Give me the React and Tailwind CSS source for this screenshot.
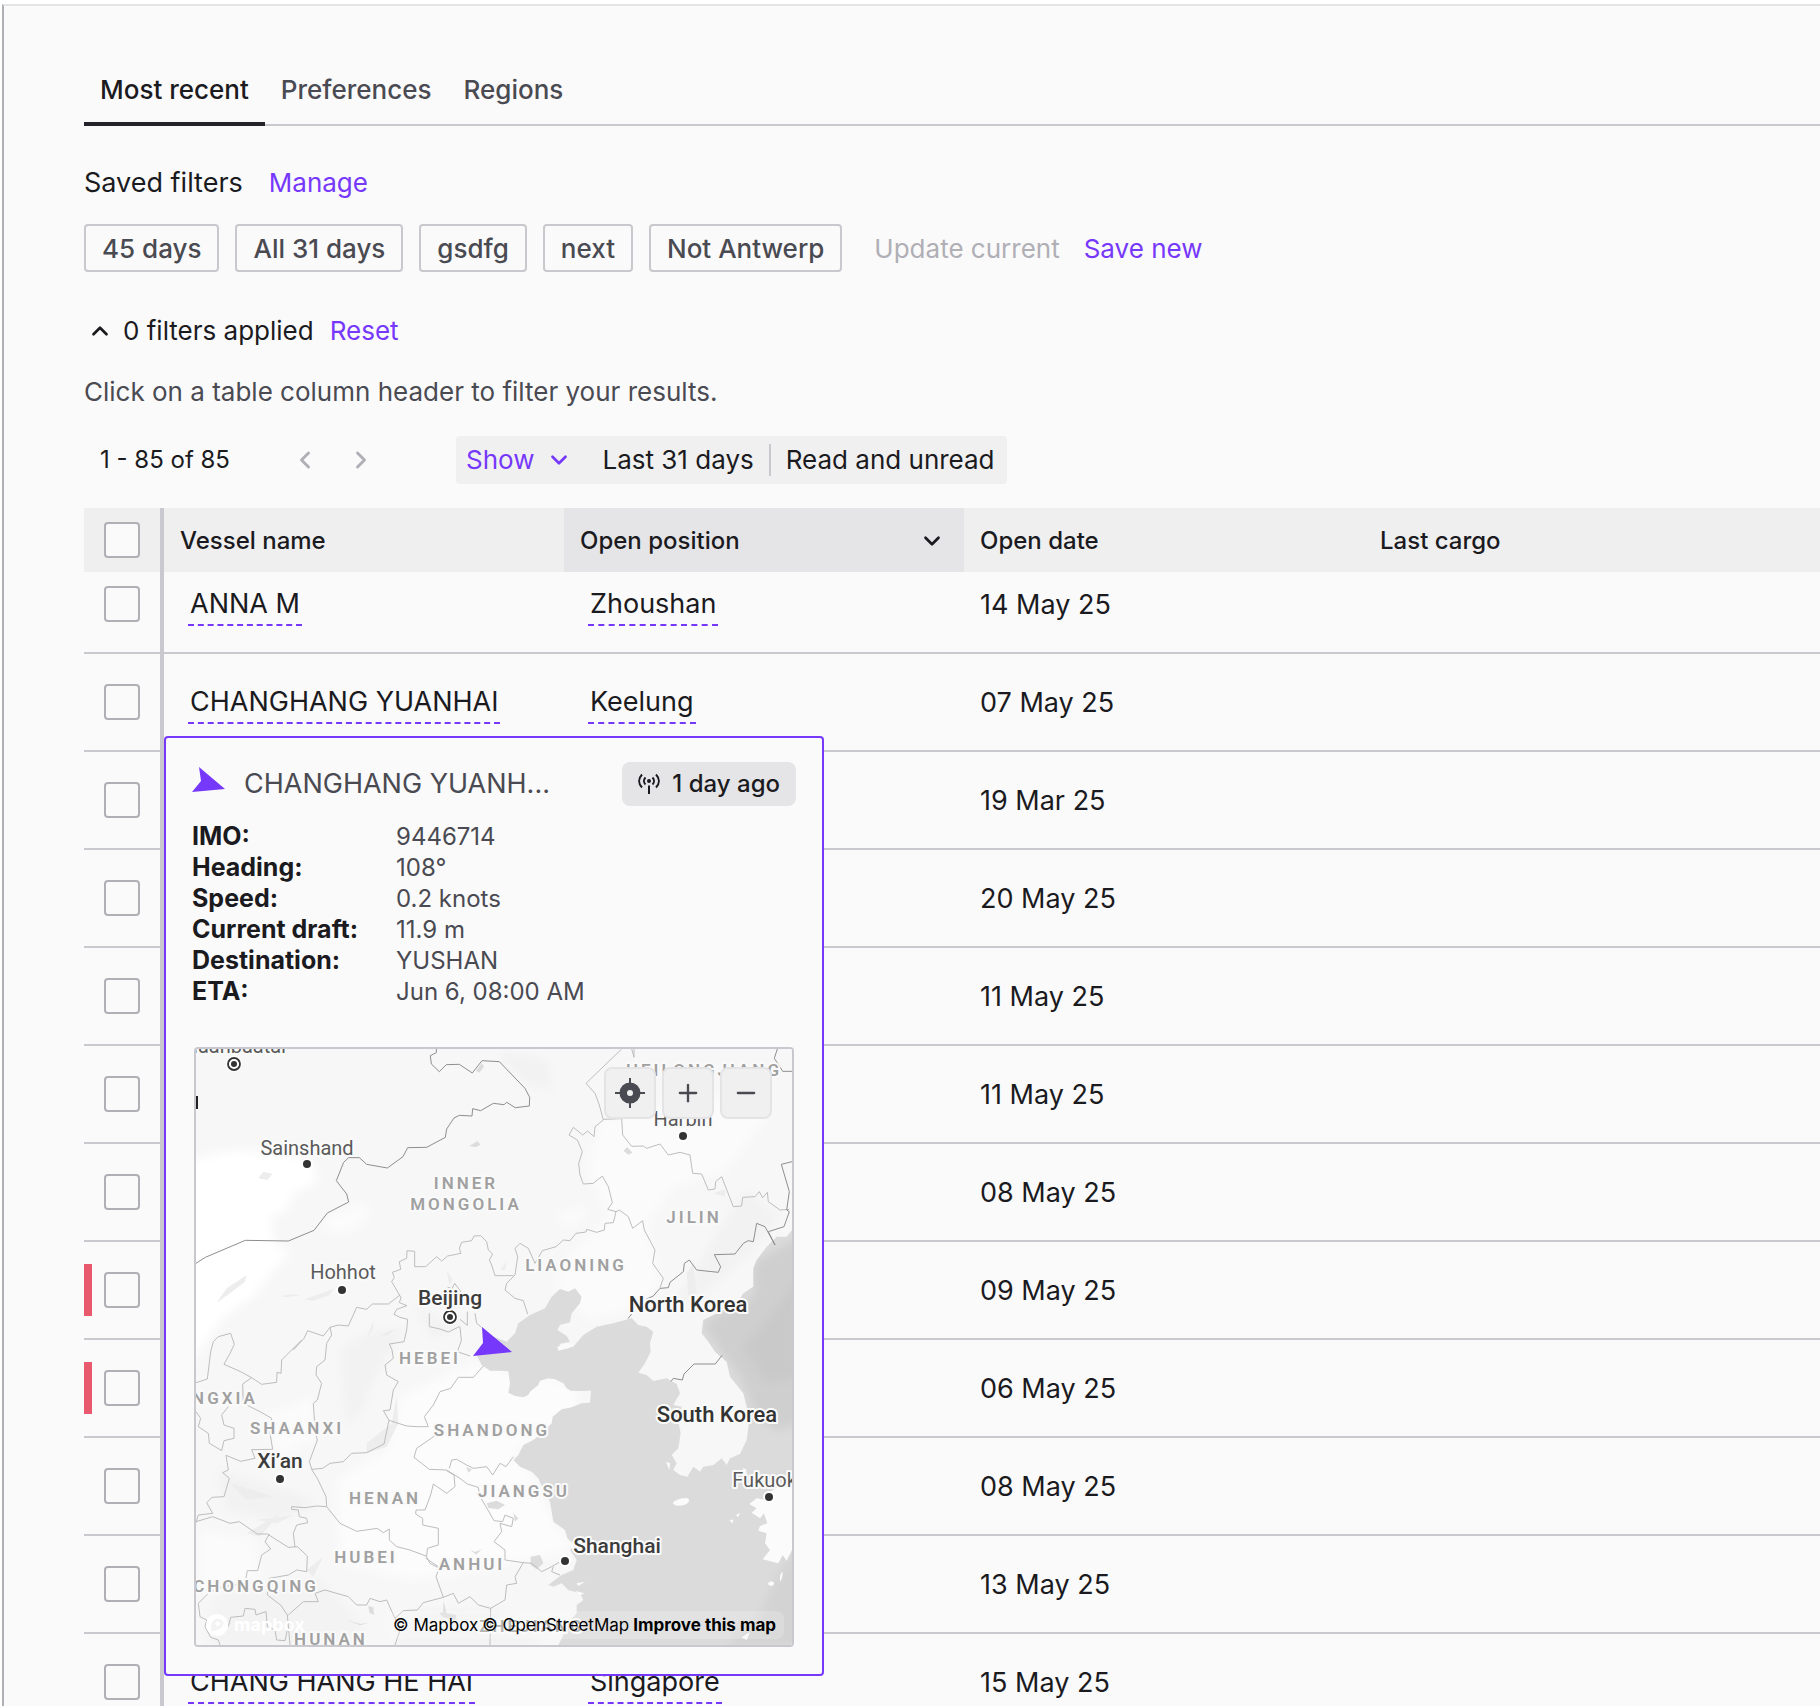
import { ChevronDown, ChevronLeft, ChevronRight, ChevronUp, Minus, Plus } from 'lucide-react';

const tabs = ['Most recent', 'Preferences', 'Regions'];

const savedFilters = ['45 days', 'All 31 days', 'gsdfg', 'next', 'Not Antwerp'];

const rows = [
  { vessel: 'ANNA M', position: 'Zhoushan', date: '14 May 25' },
  { vessel: 'CHANGHANG YUANHAI', position: 'Keelung', date: '07 May 25' },
  { date: '19 Mar 25' },
  { date: '20 May 25' },
  { date: '11 May 25' },
  { date: '11 May 25' },
  { date: '08 May 25' },
  { date: '09 May 25', flagged: true },
  { date: '06 May 25', flagged: true },
  { date: '08 May 25' },
  { date: '13 May 25' },
  { vessel: 'CHANG HANG HE HAI', position: 'Singapore', date: '15 May 25' },
];

const details = [
  ['IMO:', '9446714'],
  ['Heading:', '108°'],
  ['Speed:', '0.2 knots'],
  ['Current draft:', '11.9 m'],
  ['Destination:', 'YUSHAN'],
  ['ETA:', 'Jun 6, 08:00 AM'],
];

// label anchor points, in map pixels
const provinces = [
  ['HEILONGJIANG', 508, 27],
  ['INNER', 270, 140],
  ['MONGOLIA', 270, 161],
  ['JILIN', 498, 174],
  ['LIAONING', 380, 222],
  ['HEBEI', 234, 315],
  ['NGXIA', 29, 355],
  ['SHAANXI', 101, 385],
  ['SHANDONG', 296, 387],
  ['HENAN', 189, 455],
  ['JIANGSU', 328, 448],
  ['HUBEI', 170, 514],
  ['ANHUI', 276, 521],
  ['CHONGQING', 60, 543],
  ['HUNAN', 135, 596],
  ['ZHEJIANG', 336, 583],
];

const cities = [
  { name: 'Ulaanbaatar', x: 38, y: 4, dot: [38, 15], capital: true },
  { name: 'Sainshand', x: 111, y: 106, dot: [111, 115] },
  { name: 'Hohhot', x: 147, y: 230, dot: [146, 241] },
  { name: 'Harbin', x: 487, y: 77, dot: [487, 87] },
  { name: 'Fukuoka', x: 574, y: 438, dot: [573, 448] },
];

const majorCities = [
  { name: 'Beijing', x: 254, y: 256, dot: [254, 268], capital: true },
  { name: 'Xi’an', x: 84, y: 419, dot: [84, 430] },
  { name: 'Shanghai', x: 421, y: 504, dot: [369, 512] },
];

const countries = [
  ['North Korea', 492, 263],
  ['South Korea', 521, 373],
];

const sea =
  'M1836 600L1820 620L1790 620L1760 650L1730 690L1720 715L1720 770L1690 790L1670 820L1600 855L1570 870L1565 910L1585 935L1605 965L1640 995L1650 1040L1690 1090L1700 1130L1706 1185L1700 1230L1680 1272L1650 1285L1640 1305L1625 1285L1600 1305L1570 1310L1560 1325L1540 1310L1522 1340L1500 1335L1480 1320L1490 1300L1475 1275L1495 1255L1502 1210L1495 1175L1505 1130L1480 1125L1500 1090L1490 1062L1460 1045L1420 1053L1400 1035L1375 1028L1395 1000L1412 965L1410 940L1420 905L1400 890L1375 885L1355 865L1300 880L1250 890L1210 915L1180 950L1145 955L1138 942L1170 935L1160 918L1132 900L1140 885L1170 877L1175 850L1200 820L1205 800L1185 775L1165 785L1140 777L1115 800L1095 835L1050 855L1015 880L1005 910L980 935L940 920L900 960L890 975L905 1005L930 1022L960 1022L985 1024L990 1060L985 1088L1005 1098L1030 1102L1045 1095L1050 1085L1075 1065L1080 1052L1105 1045L1125 1048L1150 1060L1160 1075L1172 1082L1195 1083L1233 1082L1230 1118L1205 1120L1175 1132L1145 1138L1118 1160L1115 1180L1090 1205L1060 1230L1030 1245L1015 1275L1000 1290L1020 1310L1055 1325L1075 1345L1090 1380L1110 1415L1120 1475L1155 1500L1162 1525L1185 1545L1170 1560L1190 1590L1180 1620L1145 1635L1105 1665L1120 1670L1145 1660L1165 1680L1200 1690L1210 1710L1190 1725L1190 1750L1165 1780L1150 1815L1135 1845L1836 1845Z';

const borders =
  'M48 700L76 682L196 631L325 633L402 601L442 549L506 516L500 492L469 452L491 397L506 383L538 383L560 403L622 414L669 380L683 353L740 352L796 322L800 297L822 264L838 256L876 258L878 236L902 242L940 220L972 224L980 217L1006 233L1048 228L1049 202L1035 175L958 95L906 92L877 129L838 103L799 104L778 125L754 102L751 77L769 68V57' +
  'M1792 57L1783 85L1808 124H1836M1836 395L1804 403L1828 485L1820 540L1828 545L1812 590L1765 605L1785 645L1755 590L1730 580L1720 635L1705 632L1690 640L1665 672L1603 674L1622 710L1615 727L1550 720L1528 690L1513 700L1510 725L1470 757L1465 773L1440 775L1420 798L1398 808M1355 852L1344 866' +
  'M1473 1054L1480 1045L1507 1050L1512 1032L1542 1002H1606L1626 976';

const provinceLines =
  'M1325 57L1218 160L1245 190L1258 225L1270 270L1245 290L1242 320L1223 303L1208 315L1180 292L1167 315L1192 330L1207 365L1196 400L1200 435L1210 462L1240 460L1267 438L1285 470L1297 518L1283 538L1308 545L1300 578L1275 580L1273 600L1250 607L1220 598L1218 606L1188 610L1170 632L1150 630L1128 650L1087 662L1065 700L1045 655L1020 640L1005 655L1013 680L1005 735L980 760L975 780L1005 805L1030 812L1043 852' +
  'M1308 545L1318 540L1345 560L1358 595L1388 572L1393 600L1425 660L1418 700L1450 745L1440 773M1270 268L1325 266L1328 315L1355 349L1390 348L1400 355L1440 342L1465 375L1500 367L1530 375L1538 430L1565 432L1585 480L1605 477L1607 455L1625 440L1660 530L1685 528L1688 502L1725 500L1738 485L1748 503L1762 487L1765 515L1800 540L1828 538M1355 57L1362 82V57' +
  'M1000 737L945 737L935 705L928 690L938 672L925 660L920 635L902 617L882 618L875 632L845 637L838 655L843 670L803 678L785 693L770 680L737 710L704 710V664L681 662L680 685L658 695L662 718L637 727L643 742L635 755L663 803L658 818L681 827L650 838L642 853L660 862L683 868L680 900L672 935L628 942L636 960L640 985L615 1005L620 1035L655 1055L640 1080L630 1140L610 1142L627 1171L680 1188L712 1190L745 1190L733 1160L760 1125L780 1085L812 1075L835 1042L880 1042L910 1008' +
  'M803 772L816 776L824 760L846 790M748 850L748 890L780 897L805 906L838 890M862 845V886L840 868M885 850L890 880L905 892M840 890L844 932L832 965L870 978' +
  'M340 960L372 925L383 902L430 918L450 892L455 915L440 940L438 960L435 990L410 1010L408 1035L425 1060L412 1110L400 1120L406 1210L412 1230L388 1295L396 1320L412 1345L438 1400L440 1430L480 1480L530 1504L592 1495L610 1508L628 1497V1530L650 1550L690 1560L738 1578L750 1600L778 1615M450 892L475 885L505 888L530 832L560 838L577 822L625 822L660 795' +
  'M48 1058L82 1047L92 965L100 935L115 920L152 910L163 943L150 970L132 1003L182 1025L215 1043L245 1063L290 1057L291 1027L303 1030L305 990L365 930M215 1043L188 1062L190 1120L240 1145L275 1165L270 1210L278 1258L215 1259L225 1285L182 1294L138 1276L145 1320L128 1328L148 1345L132 1400L96 1402L80 1418L98 1450L55 1455L48 1478' +
  'M48 1145L62 1165L55 1190L85 1210L88 1240L125 1262L132 1232L162 1225V1195L132 1185L125 1155L145 1130M48 1475L98 1460L150 1480L178 1475L232 1512L262 1512L325 1552L352 1550L382 1578L380 1625L350 1620L325 1635L268 1645L262 1695L302 1725L322 1755L330 1845M268 1512L255 1535L272 1557L245 1575L233 1622L202 1622L195 1660L120 1672L85 1690L55 1720L60 1760L80 1770L75 1790L92 1822L115 1830L120 1845' +
  'M145 1790L152 1762L190 1758L195 1735L225 1738L228 1755L258 1745L262 1790L285 1800L290 1830L315 1832L322 1800' +
  'M345 1552L340 1510L350 1485L383 1478L380 1465L358 1460L355 1440L335 1438L335 1430L375 1433L410 1428L440 1430M396 1318L428 1315L450 1300L490 1295L515 1270L560 1268L612 1242L627 1171' +
  'M775 1210L710 1255L702 1282L748 1318L800 1320L840 1345L862 1362L895 1372L900 1400M808 1315L815 1290L830 1288L860 1305L880 1315L920 1310L938 1335L960 1300L978 1310L1000 1280M800 1322L822 1335L825 1370L800 1390L760 1362L752 1395L735 1440L708 1440L707 1452L728 1465V1485L775 1495V1545L742 1555L740 1580' +
  'M900 1400L918 1430L942 1472L968 1475L975 1455L1000 1465L995 1490L960 1480L965 1505L942 1535L975 1560V1590L1030 1598L1005 1640L1010 1660L980 1665L975 1710L932 1735L895 1725L870 1700L835 1720L820 1690L790 1702L768 1640L778 1612L738 1585M790 1702L730 1718L712 1740L670 1742L645 1765L620 1710L600 1715L570 1705L560 1725L530 1725L505 1700L435 1680L405 1690L415 1715L370 1715L325 1755' +
  'M1030 1598L1055 1600L1085 1625L1115 1610L1150 1590M1120 1610L1115 1625L1140 1635M932 1735L930 1845M645 1765L660 1800L645 1845';

function Label({ x, y, className, children }) {
  return (
    <text x={x} y={y} textAnchor="middle" stroke="#fafafa" strokeWidth="4" paintOrder="stroke" strokeLinejoin="round" className={className}>
      {children}
    </text>
  );
}

function CityDot({ at, capital }) {
  const [cx, cy] = at;
  return (
    <>
      <circle cx={cx} cy={cy} r={capital ? 8 : 6} fill="#fff" />
      {capital && <circle cx={cx} cy={cy} r="6" fill="none" stroke="#333" strokeWidth="1.8" />}
      <circle cx={cx} cy={cy} r={capital ? 3 : 4} fill="#333" />
    </>
  );
}

function MapCanvas() {
  return (
    <>
      <svg viewBox="48 57 1788 1788" className="absolute inset-0 size-full" aria-hidden="true">
        <defs>
          <filter id="relief" x="-20%" y="-20%" width="140%" height="140%">
            <feGaussianBlur stdDeviation="14" />
          </filter>
          <clipPath id="seaClip">
            <path d={sea} />
          </clipPath>
        </defs>
        <rect x="48" y="57" width="1788" height="1788" fill="#f7f7f7" />
        <g filter="url(#relief)">
          <path fill="#fff" d="M30 390L150 362L320 368L400 400L412 455L340 490L320 540L270 560L285 640L330 670L280 720L220 800L130 860L60 960L30 1000Z" />
          <path fill="#fbfbfb" d="M1260 270L1400 240L1700 180L1760 260L1640 420L1480 470L1400 580L1440 760L1380 830L1230 870L1120 760L1180 660L1290 560L1220 420Z" />
          <path fill="#fcfcfc" d="M660 1100L880 1000L1180 1060L1200 1150L1010 1260L1130 1480L1180 1560L900 1620L700 1650L480 1600L470 1350L620 1260Z" />
          <path fill="#fbfbfb" d="M60 1500L220 1530L240 1640L60 1690ZM250 1160L400 1100L410 1230L290 1280Z" />
          <path fill="#fcfcfc" d="M440 560L560 520L560 570L500 610L430 600ZM1120 560L1230 530L1180 590Z" />
          <path fill="#f2f2f2" d="M110 1320L380 1400L400 1440L280 1470L140 1440ZM480 960L580 900L680 900L600 1010L540 1150L500 1190ZM1640 560L1700 480L1800 560L1720 660L1560 800L1480 830ZM950 60L1100 90L1120 180L1030 160ZM700 820L800 880L900 850L760 930Z" />
          <path fill="#f3f3f3" d="M100 1700L420 1640L560 1800L420 1850L80 1850ZM700 1740L960 1740L1100 1850L640 1850Z" />
        </g>
        <g fill="#ededed">
          <path d="M110 818L140 775L200 735L195 755L150 790ZM300 798L340 793L358 797L320 801ZM372 808L430 788L462 775L450 795L400 812ZM235 445L250 425L278 432L262 450ZM560 925L582 868L578 900ZM600 915L650 895L620 918ZM800 720L818 750L808 765ZM150 1360L280 1400L200 1410ZM230 1470L340 1455L290 1480ZM200 1510L300 1450L240 1520ZM380 1620L430 1580L400 1640ZM560 1240L635 1180L650 1100L655 1180L620 1250L560 1270Z" />
          <path d="M1600 490L1635 478V500ZM1520 730L1540 700L1550 790L1525 800ZM960 720L980 695L975 720Z" />
        </g>
        <path fill="#dcdcdc" d="M868 348L892 334L902 344L886 352ZM888 122L905 100L912 110L898 128ZM1330 362L1342 352L1358 368L1345 374ZM858 1312L876 1318L866 1328ZM870 1558L885 1566L905 1558L888 1574ZM790 1712L800 1750L830 1755L825 1770L790 1762L778 1750L790 1745ZM565 1728L580 1732L582 1755L568 1748ZM500 1770L540 1782L568 1778L540 1786ZM920 1420L950 1412L975 1425L955 1438L925 1434ZM1052 1580L1080 1575L1090 1600L1070 1618L1052 1605ZM1000 1450L1015 1465L1005 1475Z" />
        <path d={sea} fill="#dbdbdb" />
        <g clipPath="url(#seaClip)">
          <g filter="url(#relief)">
            <path fill="#cfcfcf" d="M1860 620L1720 700L1720 800L1570 880L1620 960L1680 1040L1730 1160L1790 1200L1860 1180Z" />
            <path fill="#c9c9c9" d="M1860 740L1770 860L1690 950L1760 1060L1860 1040Z" />
            <path fill="#d3d3d3" d="M1860 1540L1790 1640L1740 1760L1640 1845L1860 1845Z" />
          </g>
        </g>
        <g fill="#fbfbfb">
          <path d="M1836 1372L1800 1368L1770 1385L1758 1410L1730 1405L1708 1422L1730 1435L1715 1448L1740 1465L1752 1450L1762 1480L1740 1488L1735 1502L1760 1510L1755 1540L1770 1560L1748 1588L1795 1600L1808 1575L1820 1592L1836 1560Z" />
          <path d="M1478 1420Q1485 1406 1520 1404Q1535 1408 1520 1422Q1490 1434 1478 1420ZM1765 1658Q1775 1648 1783 1660Q1778 1674 1765 1664ZM1800 1655Q1798 1630 1808 1626Q1808 1645 1800 1655ZM1648 1472L1660 1468L1658 1480ZM1668 1455L1680 1448L1674 1462ZM1132 950L1160 940L1180 948L1165 955L1135 962ZM1685 1822L1710 1806L1700 1830ZM1688 1315L1698 1318L1702 1345L1692 1335ZM1458 1295L1470 1300L1468 1320ZM1190 1660L1215 1655L1195 1668ZM1186 1682L1212 1690L1200 1696Z" />
        </g>
        <path d={provinceLines} fill="none" stroke="#bdbdbd" strokeWidth="3" strokeLinejoin="round" />
        <path d={borders} fill="none" stroke="#8e8e8e" strokeWidth="3" strokeLinejoin="round" />
      </svg>

      <svg viewBox="0 0 596 596" className="absolute inset-0 size-full font-['Roboto',sans-serif]">
        {provinces.map(([name, x, y]) => (
          <Label key={name} x={x} y={y} className="fill-[#a0a0a0] text-[17px] font-semibold tracking-[3px]">{name}</Label>
        ))}
        {cities.map((city) => (
          <g key={city.name}>
            <CityDot at={city.dot} capital={city.capital} />
            <Label x={city.x} y={city.y} className="fill-[#5a5a5a] text-xl">{city.name}</Label>
          </g>
        ))}
        {majorCities.map((city) => (
          <g key={city.name}>
            <CityDot at={city.dot} capital={city.capital} />
            <Label x={city.x} y={city.y} className="fill-[#3c3c3c] text-[21px] font-medium">{city.name}</Label>
          </g>
        ))}
        {countries.map(([name, x, y]) => (
          <Label key={name} x={x} y={y} className="fill-[#333] text-[22px] font-medium">{name}</Label>
        ))}
        <rect x="0" y="47" width="2" height="13" fill="#222" />
        <path d="M286 278L316 303L277 307L287 294Z" fill="#7638fa" />
      </svg>
    </>
  );
}

function MapboxLogo() {
  return (
    <a href="#mapbox" aria-label="Mapbox homepage" className="flex items-center gap-1.5 text-lg font-bold text-white">
      <svg viewBox="0 0 22 22" className="size-[22px]" fill="#fff">
        <path fillRule="evenodd" d="M11 0a11 11 0 1 0 0 22a11 11 0 0 0 0-22ZM16 13C13.600 15.600 8.500 17 5 17C4.500 13 5 8.800 7.500 6.500C10 4 13.800 4.200 16 6.300C18 8.300 18 11 16 13Z" />
        <path d="M11.800 6.300L12.900 8.600L15.200 9.700L12.900 10.800L11.800 13.100L10.700 10.800L8.400 9.700L10.700 8.600Z" />
      </svg>
      mapbox
    </a>
  );
}

function CrosshairIcon() {
  return (
    <svg viewBox="0 0 30 30" className="size-[30px]" fill="none" stroke="#4a4a52" strokeWidth="2">
      <path d="M15 0V30M0 15H30" />
      <circle cx="15" cy="15" r="6.500" strokeWidth="8" />
      <circle cx="15" cy="15" r="3" fill="#f0f0f0" stroke="none" />
    </svg>
  );
}

function SignalIcon() {
  return (
    <svg viewBox="0 0 22 22" className="size-[22px]" fill="none" stroke="#1b1b1f" strokeWidth="2">
      <path d="M4 1.500C.2 5.500 .2 10.500 4 14.500M18 1.500C21.800 5.500 21.800 10.500 18 14.500M7.500 4.500C5.500 6.500 5.500 9.500 7.500 11.500M14.500 4.500C16.500 6.500 16.500 9.500 14.500 11.500M11 12.500V21" />
      <circle cx="11" cy="8" r="2" fill="#1b1b1f" stroke="none" />
    </svg>
  );
}

function VesselPopup() {
  const controlClass = 'flex size-[52px] items-center justify-center rounded-lg border-2 border-[#e4e4e6] bg-[#f0f0f0] text-[#4a4a52]';
  return (
    <div className="absolute top-[82px] left-0 z-20 w-[660px] rounded border-2 border-[#7638fa] bg-[#fafafa] px-[26px] pt-6 pb-[27px]">
      <div className="flex items-center justify-between">
        <div className="flex min-w-0 items-center gap-[18px]">
          <svg viewBox="0 0 34 26" className="mb-2 h-[26px] w-[34px] shrink-0">
            <path d="M7 0L33 22L0 25L9 14Z" fill="#7638fa" />
          </svg>
          <h2 className="text-[27px] leading-9 text-[#4a4a52]">CHANGHANG YUANH...</h2>
        </div>
        <span className="flex h-11 items-center gap-3 rounded-lg bg-[#e5e5e7] px-4 text-2xl font-medium">
          <SignalIcon />
          1 day ago
        </span>
      </div>
      <dl className="mt-[15px] grid grid-cols-[204px_1fr] text-2xl leading-[31px]">
        {details.map(([label, value]) => (
          <div key={label} className="contents">
            <dt className="text-[25px] leading-[31px] font-bold">{label}</dt>
            <dd className="text-[#4a4a52]">{value}</dd>
          </div>
        ))}
      </dl>
      <div className="relative mx-0.5 mt-10 h-[600px] overflow-hidden rounded border-2 border-[#c9c8ce]">
        <MapCanvas />
        <div className="absolute top-[18px] right-5 flex gap-1.5">
          <button type="button" aria-label="Locate vessel" className={controlClass}><CrosshairIcon /></button>
          <button type="button" aria-label="Zoom in" className={controlClass}><Plus size={28} strokeWidth={2} /></button>
          <button type="button" aria-label="Zoom out" className={controlClass}><Minus size={28} strokeWidth={2} /></button>
        </div>
        <div className="absolute bottom-1.5 left-2.5">
          <MapboxLogo />
        </div>
        <div className="absolute right-2 bottom-1.5 flex gap-1 rounded-lg bg-white/20 px-2 text-[17px] leading-7 text-black">
          <a href="#mapbox-about">© Mapbox</a>
          <a href="#osm">© OpenStreetMap</a>
          <a href="#improve" className="font-bold">Improve this map</a>
        </div>
      </div>
    </div>
  );
}

function Checkbox({ label }) {
  return (
    <input
      type="checkbox"
      aria-label={label}
      className="block size-9 appearance-none rounded border-2 border-[#b0afb6] bg-[#fafafa] checked:bg-[#7638fa]"
    />
  );
}

function DashedLink({ children }) {
  if (!children) return null;
  return (
    <a href="#details" className="ml-2 inline-block border-b-2 border-dashed border-[#7638fa] px-0.5 pt-[3px] pb-px align-middle leading-[38px]">
      {children}
    </a>
  );
}

function VesselTable() {
  return (
    <table className="w-full table-fixed border-separate border-spacing-0 text-left">
      <thead>
        <tr className="h-16 bg-[#efefef] text-2xl [&>th]:p-0 [&>th]:font-medium">
          <th className="w-20 border-r-4 border-[#c9c8ce]">
            <div className="pl-5"><Checkbox label="Select all vessels" /></div>
          </th>
          <th className="w-[400px]"><div className="pt-0.5 pl-4">Vessel name</div></th>
          <th className="w-[400px] bg-[#e5e5e7]">
            <button type="button" className="flex w-full items-center justify-between pt-0.5 pr-[19px] pl-4">
              Open position
              <ChevronDown size={26} strokeWidth={2.5} />
            </button>
          </th>
          <th className="w-[400px]"><div className="pt-0.5 pl-4">Open date</div></th>
          <th><div className="pt-0.5 pl-4">Last cargo</div></th>
        </tr>
      </thead>
      <tbody className="text-[27px]">
        {rows.map((row, i) => (
          <tr
            key={i}
            className={`[&>td]:border-b-2 [&>td]:border-[#c9c8ce] [&>td]:p-0 ${i === 0 ? 'h-[82px] [&>td]:pb-4' : 'h-[98px]'}`}
          >
            <td className="border-r-4">
              <div className="flex items-center">
                <span className={`h-[52px] w-2 ${row.flagged ? 'bg-[#e8596e]' : ''}`} />
                <div className="pl-3"><Checkbox label={`Select vessel ${i + 1}`} /></div>
              </div>
            </td>
            <td className={i === 1 ? 'relative' : ''}>
              <div className="pl-4 whitespace-nowrap"><DashedLink>{row.vessel}</DashedLink></div>
              {i === 1 && <VesselPopup />}
            </td>
            <td><div className="pl-4"><DashedLink>{row.position}</DashedLink></div></td>
            <td><div className="pt-0.5 pl-4">{row.date}</div></td>
            <td />
          </tr>
        ))}
      </tbody>
    </table>
  );
}

export default function App() {
  return (
    <div className="flex h-screen flex-col overflow-hidden bg-white pt-1 pl-0.5 font-['Inter',sans-serif] text-[#1b1b1f]">
      <main className="grow border-t-2 border-l-2 border-t-[#e4e4e6] border-l-[#b0afb6] bg-[#fafafa] pt-[54px] pl-20">
        <nav className="flex border-b-2 border-[#c9c8ce] text-[26px] leading-[38px] font-medium">
          {tabs.map((tab, i) => (
            <a
              key={tab}
              href="#tab"
              className={`px-4 pt-[11px] ${i === 0 ? '-mb-0.5 border-b-4 border-[#232329] pb-[13px]' : 'text-[#4a4a52]'}`}
            >
              {tab}
            </a>
          ))}
        </nav>

        <div className="mt-[37px] flex items-center gap-[26px] text-[26px] leading-10">
          <h1 className="text-[27px]">Saved filters</h1>
          <button type="button" className="text-[#7638fa]">Manage</button>
        </div>

        <div className="mt-[21px] flex items-center text-[26px]">
          <div className="flex gap-4">
            {savedFilters.map((name) => (
              <button key={name} type="button" className="h-12 rounded border-2 border-[#c9c8ce] px-4 font-medium text-[#4a4a52]">
                {name}
              </button>
            ))}
          </div>
          <button type="button" disabled className="ml-8 text-[#b0afb6]">Update current</button>
          <button type="button" className="ml-6 text-[#7638fa]">Save new</button>
        </div>

        <div className="mt-10 flex items-center gap-4 text-[26px] leading-[38px]">
          <button type="button" className="flex items-center gap-2.5 pl-[3px]">
            <ChevronUp size={26} strokeWidth={2.5} />
            0 filters applied
          </button>
          <button type="button" className="text-[#7638fa]">Reset</button>
        </div>

        <p className="mt-[22px] text-[26px] leading-10 text-[#4a4a52]">Click on a table column header to filter your results.</p>

        <div className="mt-6 flex h-12 items-center text-2xl">
          <span className="w-[193px] pl-4">1 - 85 of 85</span>
          <button type="button" aria-label="Previous page" className="flex w-14 justify-center text-[#b0afb6]"><ChevronLeft size={28} strokeWidth={2.5} /></button>
          <button type="button" aria-label="Next page" className="flex w-14 justify-center text-[#b0afb6]"><ChevronRight size={28} strokeWidth={2.5} /></button>
          <div className="ml-[67px] flex h-12 items-center rounded bg-[#f0f0f0] pr-3 pl-2.5 text-[26px]">
            <button type="button" className="flex items-center gap-3 text-[#7638fa]">
              Show
              <ChevronDown size={26} strokeWidth={2.5} />
            </button>
            <span className="pl-[30px]">Last 31 days</span>
            <span className="mx-[15px] h-8 w-0.5 bg-[#c9c8ce]" />
            <span>Read and unread</span>
          </div>
        </div>

        <div className="mt-6">
          <VesselTable />
        </div>
      </main>
    </div>
  );
}
